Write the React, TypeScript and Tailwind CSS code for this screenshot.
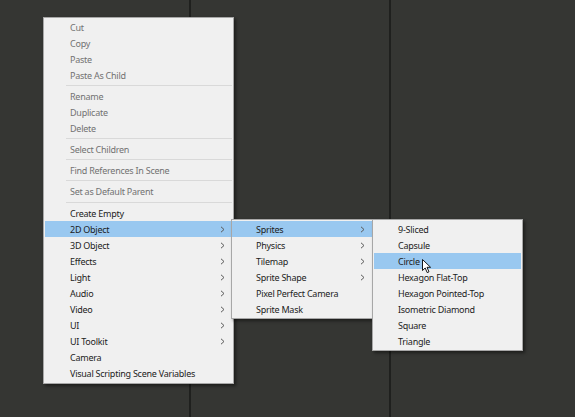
import React from 'react';

type Item =
  | { kind: 'sep'; tall?: boolean }
  | { kind: 'item'; label: string; disabled?: boolean; sub?: boolean; active?: boolean };

const mainItems: Item[] = [
  { kind: 'item', label: 'Cut', disabled: true },
  { kind: 'item', label: 'Copy', disabled: true },
  { kind: 'item', label: 'Paste', disabled: true },
  { kind: 'item', label: 'Paste As Child', disabled: true },
  { kind: 'sep' },
  { kind: 'item', label: 'Rename', disabled: true },
  { kind: 'item', label: 'Duplicate', disabled: true },
  { kind: 'item', label: 'Delete', disabled: true },
  { kind: 'sep' },
  { kind: 'item', label: 'Select Children', disabled: true },
  { kind: 'sep' },
  { kind: 'item', label: 'Find References In Scene', disabled: true },
  { kind: 'sep' },
  { kind: 'item', label: 'Set as Default Parent', disabled: true },
  { kind: 'sep', tall: true },
  { kind: 'item', label: 'Create Empty' },
  { kind: 'item', label: '2D Object', sub: true, active: true },
  { kind: 'item', label: '3D Object', sub: true },
  { kind: 'item', label: 'Effects', sub: true },
  { kind: 'item', label: 'Light', sub: true },
  { kind: 'item', label: 'Audio', sub: true },
  { kind: 'item', label: 'Video', sub: true },
  { kind: 'item', label: 'UI', sub: true },
  { kind: 'item', label: 'UI Toolkit', sub: true },
  { kind: 'item', label: 'Camera' },
  { kind: 'item', label: 'Visual Scripting Scene Variables' },
];

const objectItems: Item[] = [
  { kind: 'item', label: 'Sprites', sub: true, active: true },
  { kind: 'item', label: 'Physics', sub: true },
  { kind: 'item', label: 'Tilemap', sub: true },
  { kind: 'item', label: 'Sprite Shape', sub: true },
  { kind: 'item', label: 'Pixel Perfect Camera' },
  { kind: 'item', label: 'Sprite Mask' },
];

const spriteItems: Item[] = [
  { kind: 'item', label: '9-Sliced' },
  { kind: 'item', label: 'Capsule' },
  { kind: 'item', label: 'Circle', active: true },
  { kind: 'item', label: 'Hexagon Flat-Top' },
  { kind: 'item', label: 'Hexagon Pointed-Top' },
  { kind: 'item', label: 'Isometric Diamond' },
  { kind: 'item', label: 'Square' },
  { kind: 'item', label: 'Triangle' },
];

const Chevron = () => (
  <svg width="5" height="7" viewBox="0 0 5 7" className="shrink-0">
    <polyline points="1,0.8 4,3.5 1,6.2" fill="none" stroke="#5a5a5a" strokeWidth="1" />
  </svg>
);

const Menu: React.FC<{ items: Item[]; className: string; indent: string }> = ({ items, className, indent }) => (
  <div
    className={`absolute flex flex-col border border-[#a7a7a7] bg-[#f0f0f0] shadow-[2px_2px_3px_rgba(0,0,0,0.45)] ${className}`}
  >
    {items.map((it, i) =>
      it.kind === 'sep' ? (
        <div key={i} className={`flex items-center pl-[21px] ${it.tall ? 'h-[6px]' : 'h-[5px]'}`}>
          <div className="h-px w-full bg-[#d9d9d9]" />
        </div>
      ) : (
        <div
          key={i}
          className={`flex h-4 items-center pr-[7px] ${indent} ${it.active ? 'bg-[#99c8f0]' : ''} ${
            it.disabled ? 'text-[#727272]' : 'text-[#1c1c1c]'
          }`}
        >
          <span className="flex-1 whitespace-nowrap pt-px leading-none tracking-[-0.25px]">{it.label}</span>
          {it.sub && <Chevron />}
        </div>
      )
    )}
  </div>
);

export default function App() {
  return (
    <div
      className="relative h-[417px] w-[575px] overflow-hidden bg-[#353633] text-[9px]"
      style={{ fontFamily: '"Noto Sans", "Noto Sans CJK KR", sans-serif' }}
    >
      <div className="flex h-full">
        <div className="w-[189px]" />
        <div className="w-[2px] bg-[#1f201e]" />
        <div className="w-[198px]" />
        <div className="w-[2px] bg-[#1f201e]" />
        <div className="flex-1" />
      </div>

      <Menu items={mainItems} className="left-[43px] top-[17px] w-[191px] px-[1px] pt-[1px] pb-[2px]" indent="pl-[25px]" />
      <Menu items={objectItems} className="left-[231px] top-[219px] w-[142px] py-[1px]" indent="pl-[24px]" />
      <Menu items={spriteItems} className="left-[372px] top-[219px] w-[151px] px-[1px] py-[1px]" indent="pl-[24px]" />

      <svg width="10" height="15" viewBox="0 0 10 15" className="absolute left-[422px] top-[259px]">
        <path d="M0.5,0.5 L0.5,11.5 L3.2,9 L5.2,13.6 L7,12.8 L5,8.3 L8.6,8.3 Z" fill="#ffffff" stroke="#000000" strokeWidth="0.9" strokeLinejoin="round" />
      </svg>
    </div>
  );
}
